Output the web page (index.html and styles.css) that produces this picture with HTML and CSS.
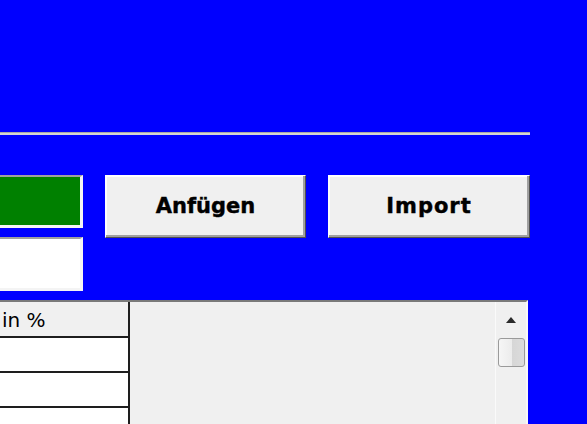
FILE: index.html
```html
<!DOCTYPE html>
<html lang="de">
<head>
<meta charset="utf-8">
<title>Import</title>
<link rel="stylesheet" href="styles.css">
</head>
<body>
<div class="page">
  <div class="separator"></div>
  <div class="controls">
    <div class="fields">
      <div class="field field-green"></div>
      <div class="field field-white"></div>
    </div>
    <button class="btn btn-add" type="button">Anfügen</button>
    <button class="btn btn-import" type="button">Import</button>
  </div>
  <div class="grid">
    <div class="cells">
      <div class="col">
        <div class="hcell">in %</div>
        <div class="cell"></div>
        <div class="cell"></div>
        <div class="cell"></div>
      </div>
      <div class="empty"></div>
    </div>
    <div class="vscroll">
      <div class="arrow"></div>
      <div class="thumb"></div>
    </div>
  </div>
</div>
</body>
</html>
```
FILE: styles.css
```css
html, body {
  margin: 0;
  padding: 0;
  background: #0000ff;
  overflow: hidden;
  height: 100%;
}

.page {
  padding-top: 132px;
  font-family: "DejaVu Sans", Verdana, sans-serif;
}

.separator {
  width: 530px;
  height: 3px;
  box-sizing: border-box;
  border-top: 1px solid #a8a8a8;
  background: #d4d4d4;
  margin-bottom: 40px;
}

.controls {
  display: flex;
  align-items: flex-start;
  gap: 22px;
}

.fields {
  width: 83px;
  display: flex;
  flex-direction: column;
  gap: 9px;
}

.field {
  box-sizing: border-box;
  border-top: 2px solid #a0a0a0;
  border-right: 3px solid #f4f4f4;
  border-bottom: 3px solid #f4f4f4;
}

.field-green {
  height: 53px;
  background: #008000;
}

.field-white {
  height: 54px;
  background: #ffffff;
}

.btn {
  box-sizing: border-box;
  height: 63px;
  background: #f0f0f0;
  border-style: solid;
  border-width: 1px;
  border-color: #ffffff #505050 #505050 #ffffff;
  box-shadow: inset -2px -2px 0 #a0a0a0, inset 1px 1px 0 #ffffff;
  font-family: "DejaVu Sans", Verdana, sans-serif;
  font-weight: bold;
  font-size: 21px;
  -webkit-text-stroke: 0.4px #000000;
  color: #000000;
  padding: 0 0 2px 0;
  margin: 0;
}

.btn-add {
  width: 201px;
}

.btn-import {
  width: 202px;
  letter-spacing: 1px;
}

.grid {
  margin-top: 9px;
  width: 528px;
  height: 140px;
  box-sizing: border-box;
  border-top: 2px solid #7a7a7a;
  border-right: 2px solid #f8f8f8;
  display: flex;
  background: #f0f0f0;
}

.cells {
  flex: 1;
  display: flex;
}

.col {
  width: 128px;
  border-right: 2px solid #1e1e1e;
  background: #ffffff;
}

.hcell {
  box-sizing: border-box;
  background: #f0f0f0;
  border-bottom: 2px solid #1e1e1e;
  height: 36px;
  padding: 6px 0 0 2px;
  font-size: 20px;
  color: #000000;
  line-height: 24px;
}

.cell {
  height: 35px;
  box-sizing: border-box;
  border-bottom: 2px solid #1e1e1e;
  background: #ffffff;
}

.empty {
  flex: 1;
  background: #f0f0f0;
}

.vscroll {
  width: 31px;
  box-sizing: border-box;
  border-left: 1px solid #fafafa;
  background: #f0f0f0;
  display: flex;
  flex-direction: column;
  align-items: center;
  padding-top: 15px;
}

.arrow {
  width: 0;
  height: 0;
  border-left: 5.5px solid transparent;
  border-right: 5.5px solid transparent;
  border-bottom: 6px solid #2a2a2a;
}

.thumb {
  margin-top: 15px;
  margin-left: 1px;
  width: 27px;
  height: 29px;
  box-sizing: border-box;
  border: 1px solid #9a9a9a;
  border-radius: 3px;
  background: linear-gradient(to right, #f6f6f6 0, #ececec 50%, #d6d6d6 50%, #dcdcdc 100%);
}
```
